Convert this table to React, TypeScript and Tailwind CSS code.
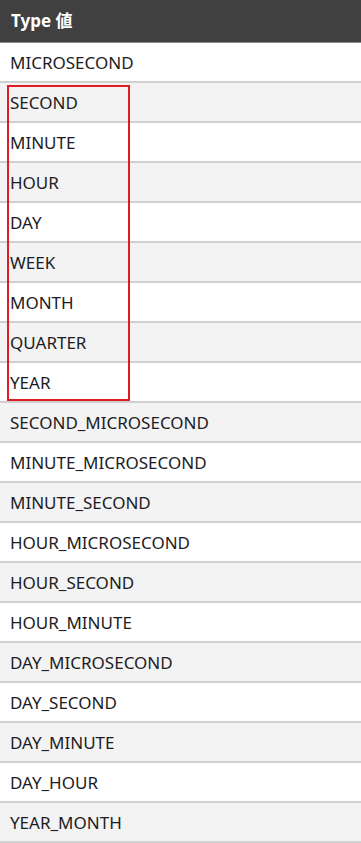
import React from "react";

const rows = [
  "MICROSECOND","SECOND","MINUTE","HOUR","DAY","WEEK","MONTH","QUARTER","YEAR",
  "SECOND_MICROSECOND","MINUTE_MICROSECOND","MINUTE_SECOND","HOUR_MICROSECOND","HOUR_SECOND",
  "HOUR_MINUTE","DAY_MICROSECOND","DAY_SECOND","DAY_MINUTE","DAY_HOUR","YEAR_MONTH",
];

export default function App() {
  return (
    <div className="relative w-[361px] bg-white" style={{ fontFamily: '"Noto Sans", "Noto Sans CJK JP", sans-serif' }}>
      <div className="h-[43px] bg-[#404040] border-b border-[#8a8a8a] flex items-center pl-[11px] text-white font-bold text-[17px]">
        Type 値
      </div>
      {rows.map((r, i) => (
        <div
          key={r}
          className={`h-[40px] border-b-2 border-[#d0d0d0] flex items-center pl-[10px] pt-[2px] text-[17px] text-[#1c1c24] ${i % 2 === 0 ? "bg-white" : "bg-[#f3f3f3]"}`}
        >
          {r}
        </div>
      ))}
      <div className="absolute left-[7px] top-[85px] w-[123px] h-[316px] border-2 border-[#e01b24]" />
    </div>
  );
}
